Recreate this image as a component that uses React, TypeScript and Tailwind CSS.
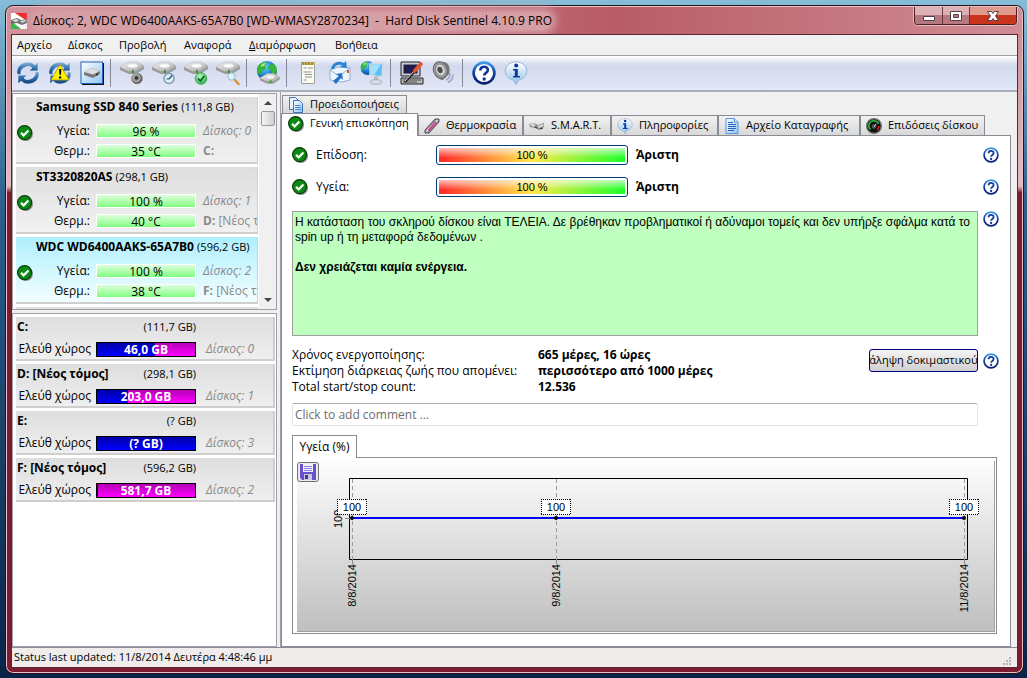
import { useState, type ReactNode } from 'react';

const disks = [
  { id: 0, name: 'Samsung SSD 840 Series', size: '(111,8 GB)', health: '96 %', temp: '35 °C', drive: 'C:', label: '' },
  { id: 1, name: 'ST3320820AS', size: '(298,1 GB)', health: '100 %', temp: '40 °C', drive: 'D:', label: '[Νέος τόμος]' },
  { id: 2, name: 'WDC WD6400AAKS-65A7B0', size: '(596,2 GB)', health: '100 %', temp: '38 °C', drive: 'F:', label: '[Νέος τόμος]' },
];

const volumes = [
  { name: 'C:', size: '(111,7 GB)', free: '46,0 GB', used: 59, disk: 0 },
  { name: 'D: [Νέος τόμος]', size: '(298,1 GB)', free: '203,0 GB', used: 32, disk: 1 },
  { name: 'E:', size: '(? GB)', free: '(? GB)', used: 100, disk: 3 },
  { name: 'F: [Νέος τόμος]', size: '(596,2 GB)', free: '581,7 GB', used: 1, disk: 2 },
];

const menu = [
  { text: 'Αρχείο', width: 'w-[51px]' },
  { text: 'Δίσκος', width: 'w-[51px]' },
  { text: 'Προβολή', width: 'w-[65px]' },
  { text: 'Αναφορά', width: 'w-[65px]' },
  { text: 'Διαμόρφωση', width: 'w-[86px]', accel: true },
  { text: 'Βοήθεια', width: 'w-[60px]' },
];

function Defs() {
  return (
    <svg className="absolute h-0 w-0" aria-hidden="true">
      <defs>
        <linearGradient id="sync" x1="0" y1="0" x2="0" y2="1">
          <stop offset="0" stopColor="#8fb6dd" />
          <stop offset="0.5" stopColor="#2f6fae" />
          <stop offset="1" stopColor="#123f78" />
        </linearGradient>
        <linearGradient id="metal" x1="0" y1="0" x2="1" y2="1">
          <stop offset="0" stopColor="#fafafa" />
          <stop offset="1" stopColor="#a2a2a2" />
        </linearGradient>
        <radialGradient id="globe" cx="0.4" cy="0.3" r="0.8">
          <stop offset="0" stopColor="#6fd0ff" />
          <stop offset="0.6" stopColor="#1272c8" />
          <stop offset="1" stopColor="#083a80" />
        </radialGradient>
        <radialGradient id="ok" cx="0.4" cy="0.3" r="0.8">
          <stop offset="0" stopColor="#b4f5bd" />
          <stop offset="1" stopColor="#1fae45" />
        </radialGradient>
        <linearGradient id="ring" x1="0" y1="0" x2="0" y2="1">
          <stop offset="0" stopColor="#3f9be8" />
          <stop offset="0.5" stopColor="#123c9c" />
          <stop offset="1" stopColor="#0a1f6e" />
        </linearGradient>
        <linearGradient id="bubble" x1="0" y1="0" x2="0" y2="1">
          <stop offset="0" stopColor="#ffffff" />
          <stop offset="1" stopColor="#8fc0e8" />
        </linearGradient>
        <linearGradient id="paper" x1="0" y1="0" x2="1" y2="1">
          <stop offset="0" stopColor="#ffffff" />
          <stop offset="1" stopColor="#8fc4f4" />
        </linearGradient>
        <linearGradient id="chart" x1="0" y1="0" x2="0" y2="1">
          <stop offset="0" stopColor="#fdfdfd" />
          <stop offset="1" stopColor="#bfbfbf" />
        </linearGradient>
      </defs>
    </svg>
  );
}

function Sync() {
  return (
    <>
      <path d="M1 13C0 6 5 1 12 1c3 0 5 1 7 3l3-3v9h-9l3-3c-2-2-4-2-6-1-4 1-6 4-5 8L1 13z" fill="url(#sync)" stroke="#e4eefa" strokeWidth="0.6" />
      <path d="M23 11c1 7-4 12-11 12-3 0-5-1-7-3l-3 3v-9h9l-3 3c2 2 4 2 6 1 4-1 6-4 5-8l4 1z" fill="url(#sync)" stroke="#e4eefa" strokeWidth="0.6" />
    </>
  );
}

function Drive() {
  return (
    <>
      <path d="M0 6L9 1h8l7 4v3l-8 5H9L0 9z" fill="#9a9a9a" />
      <path d="M0 6L9 1h8l7 4-8 5H8z" fill="url(#metal)" stroke="#b5b5b5" strokeWidth="0.5" />
      <ellipse cx="12.500" cy="4.800" rx="5" ry="2.200" fill="#f8f8f8" stroke="#c8c8c8" strokeWidth="0.5" />
      <path d="M12 9h2v3h-2z" fill="#2f9a2f" />
    </>
  );
}

function Globe() {
  return (
    <>
      <circle cx="11" cy="10" r="10" fill="url(#globe)" />
      <path d="M4 3c3-2 6-2 7-1l-2 3 1 3-4 2-1 4-3-2C0 9 1 5 4 3zM13 4l5-1c2 2 3 5 3 7l-3 5-3-1 1-4-4-2z" fill="#35b53a" />
      <path d="M5 4c2-2 4-2 5-2L8 5 5 6z" fill="#a4ec7c" />
    </>
  );
}

function Icon({ children }: { children: ReactNode }) {
  return (
    <svg className="h-6 w-6" viewBox="0 0 24 24" aria-hidden="true">
      {children}
    </svg>
  );
}

function SmallSpeaker() {
  return (
    <>
      <circle cx="17" cy="17.500" r="5.500" fill="#555" stroke="#a5a5a5" strokeWidth="0.800" />
      <circle cx="16.500" cy="17" r="3.800" fill="#8e8e8e" stroke="#ccc" strokeWidth="0.800" />
      <circle cx="16.500" cy="17" r="1.800" fill="#333" />
    </>
  );
}

function QuestionIcon({ big }: { big?: boolean }) {
  return (
    <svg className={big ? 'h-6 w-6' : 'h-4 w-4'} viewBox="0 0 24 24" aria-hidden="true">
      <circle cx="12" cy="12" r="10.400" fill="#fff" stroke="url(#ring)" strokeWidth="2.600" />
      <path d="M8.300 9.500c0-5 7.600-5 7.600-.5 0 3-3.700 2.800-3.700 5.500" fill="none" stroke="#0f3596" strokeWidth="2.600" />
      <circle cx="12.200" cy="18" r="1.700" fill="#0f3596" />
    </svg>
  );
}

function InfoIcon({ big }: { big?: boolean }) {
  return (
    <svg className={big ? 'h-6 w-6' : 'h-4 w-4'} viewBox="0 0 24 24" aria-hidden="true">
      <path d="M12 .8c6 0 10.800 4 10.800 9.200 0 4.700-3.600 8-8 8.900L12 23.500l-2.800-4.600c-4.400-.9-8-4.200-8-8.900C1.200 4.800 6 .8 12 .8z" fill="url(#bubble)" stroke="#8fb4d6" />
      <circle cx="12.200" cy="4.500" r="2" fill="#0b3a9c" />
      <path d="M9 8h4.800v7H16v1.600H9V15h1.800V9.600H9z" fill="#0b3a9c" />
    </svg>
  );
}

function CheckIcon() {
  return (
    <svg className="h-4 w-4 shrink-0" viewBox="0 0 16 16" aria-hidden="true">
      <circle cx="8.800" cy="8.800" r="7.200" fill="#888" />
      <circle cx="7.600" cy="7.600" r="7" fill="#0a8a12" stroke="#0b3d0d" strokeWidth="1.200" />
      <path d="M4 7.800l2.600 2.600 4.800-5" fill="none" stroke="#fff" strokeWidth="2.200" />
    </svg>
  );
}

const toolbar: { title: string; icon: ReactNode }[][] = [
  [
    { title: 'Refresh', icon: <Icon><Sync /></Icon> },
    {
      title: 'Refresh now',
      icon: (
        <Icon>
          <Sync />
          <path d="M12 3.500L21 19H3z" fill="#ffee00" stroke="#a89a00" strokeWidth="0.8" strokeLinejoin="round" />
          <path d="M11 8h2.400l-.6 6h-1.200zM11 15.500h2.200v2H11z" fill="#000" />
        </Icon>
      ),
    },
    {
      title: 'Disk view',
      icon: (
        <Icon>
          <rect x="2" y="2" width="22" height="22" fill="#111" />
          <rect x="1" y="1" width="21.500" height="21.500" fill="url(#paper)" stroke="#2463b8" />
          <path d="M4 11l8-4 8 3v3l-7 4-9-3z" fill="#777" />
          <path d="M4 11l8-4 8 3-7 3.500z" fill="#ddd" />
          <circle cx="17" cy="13.500" r="1" fill="#222" />
        </Icon>
      ),
    },
  ],
  [
    { title: 'Acoustic', icon: <Icon><Drive /><SmallSpeaker /></Icon> },
    {
      title: 'Short test',
      icon: (
        <Icon>
          <Drive />
          <circle cx="17" cy="17.500" r="5" fill="#dff0fb" stroke="#7d9bb3" strokeWidth="1.500" />
          <path d="M17 18l3-3.500M17 18h-2.500" stroke="#234f7a" strokeWidth="1.200" />
        </Icon>
      ),
    },
    {
      title: 'Extended test',
      icon: (
        <Icon>
          <Drive />
          <circle cx="17" cy="17.500" r="5.800" fill="url(#ok)" stroke="#2c9a44" strokeWidth="0.800" />
          <path d="M14 17.500l2.300 2.500 4-5" fill="none" stroke="#0a5a1e" strokeWidth="1.500" />
        </Icon>
      ),
    },
    {
      title: 'Surface test',
      icon: (
        <Icon>
          <Drive />
          <path d="M18 18l4.500 5" stroke="#e0913a" strokeWidth="2.600" strokeLinecap="round" />
          <circle cx="15.500" cy="15.500" r="3.700" fill="#d6f0ff" stroke="#9fb9cc" />
        </Icon>
      ),
    },
  ],
  [
    {
      title: 'Network disks',
      icon: <Icon><Globe /><g transform="translate(4 12) scale(.82)"><Drive /></g></Icon>,
    },
  ],
  [
    {
      title: 'Report',
      icon: (
        <Icon>
          <path d="M5.500 2.500h13v20h-13z" fill="#fbfbf3" stroke="#9da39a" />
          <path d="M5 1h14v3H5z" fill="#c8b35a" />
          <path d="M7 1v3M10 1v3M13 1v3M16 1v3" stroke="#7d6a2a" />
          <path d="M7.500 7h3M12 7h5M7.500 11h8M9 13.500h7M9 16h7M7.500 19h3" stroke="#8c9098" />
        </Icon>
      ),
    },
    {
      title: 'Send report',
      icon: (
        <Icon>
          <path d="M2 9l8-3 12 1v12l-8 2-12-2z" fill="#eef5fc" stroke="#8eb2d2" />
          <path d="M2 9l9 6 11-8" fill="none" stroke="#8eb2d2" />
          <path d="M3 8C4 3 8 0 13 1l3 1 2-2 1 7-7-1 2-2c-4-1-7 0-8 4z" fill="#2d83d6" />
          <path d="M19 9h2v3h-2z" fill="#d8501e" />
          <path d="M14 12l1 7-2-2-5 6-3-3 6-5-3-2z" fill="#2272cc" />
        </Icon>
      ),
    },
    {
      title: 'Web status',
      icon: (
        <Icon>
          <g transform="scale(.7)"><Globe /></g>
          <path d="M10 3l13-1-1 14-12-2z" fill="#5cc0f6" stroke="#d2d9e2" strokeWidth="1.500" />
          <path d="M11 4l10-1-7 11-3-1z" fill="#a3e0ff" />
          <path d="M14 15h4v5h-4z" fill="#b7bcc8" />
          <ellipse cx="16" cy="21" rx="6" ry="2.500" fill="#d6dae4" stroke="#a9aebb" />
        </Icon>
      ),
    },
  ],
  [
    {
      title: 'Configuration',
      icon: (
        <Icon>
          <path d="M1 1h19v14H1z" fill="#c9c9d0" stroke="#222" />
          <path d="M3.500 3.500h14v9H3.500z" fill="#1e1e4c" />
          <path d="M1 17h22v6H1z" fill="#b7b7bd" stroke="#222" />
          <path d="M3 19h18M3 21h14" stroke="#555" />
          <path d="M5 21L15 10" stroke="#222" strokeWidth="2.500" />
          <path d="M5 20L14 10" stroke="#ddd" />
          <path d="M14.500 10l6.500-7" stroke="#e4562a" strokeWidth="3.600" strokeLinecap="round" />
        </Icon>
      ),
    },
    {
      title: 'Sound',
      icon: (
        <Icon>
          <path d="M2 6l8-5c6-1 9 5 7 12l-6 6C6 19 1 14 2 6z" fill="#777" />
          <ellipse cx="8.500" cy="9" rx="7" ry="8.500" fill="#9a9a9a" stroke="#666" transform="rotate(-20 8.500 9)" />
          <ellipse cx="8.500" cy="9" rx="4.800" ry="6" fill="#d4d4d4" stroke="#888" transform="rotate(-20 8.500 9)" />
          <ellipse cx="8" cy="9" rx="2.500" ry="3.200" fill="#4a4a4a" transform="rotate(-20 8 9)" />
          <path d="M14 19c3-1 4-4 4-7M16 21.500c4-2 5-5 5-8" fill="none" stroke="#9d9fc4" strokeWidth="1.500" />
        </Icon>
      ),
    },
  ],
  [
    { title: 'Help', icon: <QuestionIcon big /> },
    { title: 'About', icon: <InfoIcon big /> },
  ],
];

const tabs: { text: string; width: string; icon: ReactNode }[] = [
  { text: 'Γενική επισκόπηση', width: 'w-[137px]', icon: <CheckIcon /> },
  {
    text: 'Θερμοκρασία',
    width: 'w-[105px]',
    icon: (
      <svg className="h-4 w-4 shrink-0" viewBox="0 0 16 16" aria-hidden="true">
        <path d="M1 12L11 1h4v3L5 15H1z" fill="#8d8d94" stroke="#55555c" />
        <path d="M2.500 13.500L13.500 2" stroke="#ededf0" strokeWidth="1.300" />
        <path d="M4.500 12.500L12 4" stroke="#e0409a" strokeWidth="2" />
      </svg>
    ),
  },
  {
    text: 'S.M.A.R.T.',
    width: 'w-[88px]',
    icon: (
      <svg className="h-4 w-4 shrink-0" viewBox="0 0 16 16" aria-hidden="true">
        <path d="M0 6l5-1 4 2 6-2v4l-5 3-4-2-5-1z" fill="#8b8b8b" />
        <path d="M0 6l4-1 3 2-3 2zM8 8l6-2 1 2-5 2z" fill="#d5d5d5" />
        <path d="M6 9l2 1M11 11l3-1" stroke="#333" />
      </svg>
    ),
  },
  { text: 'Πληροφορίες', width: 'w-[107px]', icon: <InfoIcon /> },
  {
    text: 'Αρχείο Καταγραφής',
    width: 'w-[142px]',
    icon: (
      <svg className="h-4 w-4 shrink-0" viewBox="0 0 16 16" aria-hidden="true">
        <path d="M2 .5h8.500L14 4v11.500H2z" fill="url(#paper)" stroke="#5a94d4" />
        <path d="M10.500.5V4H14" fill="#d8ecff" stroke="#5a94d4" />
        <path d="M4 4.500h5M4 6.500h8M4 8.500h8M4 10.500h8M4 12.500h6" stroke="#2a62b8" />
      </svg>
    ),
  },
  {
    text: 'Επιδόσεις δίσκου',
    width: 'w-[125px]',
    icon: (
      <svg className="h-4 w-4 shrink-0" viewBox="0 0 16 16" aria-hidden="true">
        <circle cx="8" cy="8" r="7.300" fill="#111" stroke="#6d6d6d" strokeWidth="1.400" />
        <path d="M4.500 11.500A5 5 0 1 1 12.500 6" fill="none" stroke="#20c43a" strokeWidth="1.600" />
        <path d="M13 8a5 5 0 0 1-2 3.800" fill="none" stroke="#e02020" strokeWidth="1.600" />
        <circle cx="8" cy="8.500" r="1.800" fill="#3a3a3a" stroke="#888" strokeWidth="0.600" />
        <path d="M8 9l2-3" stroke="#ddd" />
      </svg>
    ),
  },
];

function HelpButton() {
  return (
    <button aria-label="Help" className="h-4 w-4 shrink-0">
      <QuestionIcon />
    </button>
  );
}

function DiskItem({ disk, selected }: { disk: (typeof disks)[number]; selected: boolean }) {
  return (
    <li
      className={`mb-[3px] box-content flex h-[65px] overflow-hidden border-b-2 border-r border-[#cfcfcf] bg-linear-to-b whitespace-nowrap ${
        selected ? 'from-[#aeeffe] to-[#f2feff]' : 'from-[#dedede] to-[#f1f1f1]'
      }`}
    >
      <div className="flex w-5 shrink-0 items-center pt-[6px] pl-px">
        <CheckIcon />
      </div>
      <div>
        <div className="mb-1 leading-5">
          <b>{disk.name}</b> <span className="text-[11px]">{disk.size}</span>
        </div>
        <div className="flex h-5 items-center">
          <span className="w-[54px] text-right">Υγεία:</span>
          <Meter text={disk.health} />
          <i className="pl-px text-[#8a8a8a]">Δίσκος: {disk.id}</i>
        </div>
        <div className="flex h-5 items-center">
          <span className="w-[54px] text-right">Θερμ.:</span>
          <Meter text={disk.temp} />
          <span className="pl-px text-[#8a8a8a]">
            <b>{disk.drive}</b> {disk.label}
          </span>
        </div>
      </div>
    </li>
  );
}

function Meter({ text }: { text: string }) {
  return (
    <span className="mx-[6px] h-[14px] w-[100px] shrink-0 border border-white bg-linear-to-b from-[#dcffdc] to-[#7dff7d] text-center leading-[14px]">
      {text}
    </span>
  );
}

function VolumeItem({ volume }: { volume: (typeof volumes)[number] }) {
  return (
    <li className="mb-[3px] box-content h-[42px] border-b-2 border-r-2 border-[#cfcfcf] bg-linear-to-b from-[#dedede] to-[#efefef] whitespace-nowrap">
      <div className="flex w-[180px] justify-between pl-px leading-5">
        <b>{volume.name}</b>
        <span className="text-[11px]">{volume.size}</span>
      </div>
      <div className="flex h-6 items-center">
        <span className="w-[75px] text-right">Ελεύθ χώρος</span>
        <div className="relative ml-[5px] h-[15px] w-[100px] overflow-hidden border border-black bg-linear-to-b from-[#b400b4] to-[#ff00ff] text-center leading-[14px] font-bold text-white">
          <div className="absolute inset-y-0 left-0 bg-linear-to-b from-[#0000a8] to-[#0000ff]" style={{ width: `${volume.used}%` }} />
          <span className="relative">{volume.free}</span>
        </div>
        <i className="ml-[10px] text-[#8a8a8a]">Δίσκος: {volume.disk}</i>
      </div>
    </li>
  );
}

function StatusRow({ label }: { label: string }) {
  return (
    <div className="flex h-8 items-center">
      <CheckIcon />
      <span className="ml-2 w-[120px]">{label}</span>
      <div className="h-5 w-[192px] rounded-[3px] border border-[#003c74] bg-white p-[2px]">
        <div className="h-full bg-linear-to-r/srgb from-[#ff2828] via-[#ffe94a] to-[#1cff28]">
          <div className="h-full bg-linear-to-b from-white/70 to-transparent to-70% text-center font-['Liberation_Sans'] text-[11px] leading-[14px]">
            100 %
          </div>
        </div>
      </div>
      <b className="ml-2">Άριστη</b>
      <span className="flex-1" />
      <HelpButton />
    </div>
  );
}

const points = [
  { x: 55, date: '8/8/2014' },
  { x: 259, date: '9/8/2014' },
  { x: 667, date: '11/8/2014' },
];

function HealthChart() {
  return (
    <svg className="block w-full border-r border-b border-[#a0a0a0]" viewBox="0 0 697 170" fontFamily="Liberation Sans, sans-serif" fontSize="11">
      <rect width="697" height="170" fill="url(#chart)" />
      <path d="M52.500 17.500h618v81h-618z" fill="none" stroke="#000" />
      <path d="M48 57.500h5" stroke="#888" />
      <text transform="translate(45 67) rotate(-90)">100</text>
      {points.map((p) => (
        <g key={p.date}>
          <path d={`M${p.x + 0.5} 18v82`} stroke="#999" strokeDasharray="4 3" />
          <path d={`M${p.x + 0.5} 99v4`} stroke="#888" />
        </g>
      ))}
      <path d="M55 57h612" stroke="#0000ff" strokeWidth="2" />
      {points.map((p) => (
        <g key={p.date}>
          <circle cx={p.x} cy="57" r="2" fill="#000" />
          <rect x={p.x - 14.5} y="38.500" width="29" height="15" fill="#fff" />
          <path
            d={`M${p.x - 15} 38.500h30M${p.x - 15} 53.500h30M${p.x - 14.5} 38v16M${p.x + 14.5} 38v16`}
            stroke="#000"
            strokeDasharray="1 1"
            shapeRendering="crispEdges"
          />
          <text x={p.x} y="50" textAnchor="middle">
            100
          </text>
          <text transform={`translate(${p.x + 4} 103) rotate(-90)`} textAnchor="end">
            {p.date}
          </text>
        </g>
      ))}
    </svg>
  );
}

export default function App() {
  const [tab, setTab] = useState(0);
  const [comment, setComment] = useState('');

  return (
    <div className="flex h-screen flex-col bg-linear-to-b from-[#86bdd8] via-[#2c5f8c] via-30% to-[#0a2448] pt-[5px] pr-[3px] pb-1 pl-[5px] font-['Open_Sans','Noto_Sans',sans-serif] text-[12px] text-black">
      <Defs />
      <div className="flex min-h-0 flex-1 flex-col rounded-lg border border-[#23131a] bg-linear-to-b from-[#c9848d] via-[#e3bcc2] via-27% to-[#7d1c30] to-28% px-[5px] pb-[5px] shadow-[inset_0_0_0_1px_#e9c3c8]">
        <header className="-mx-1 mt-px flex h-[27px] shrink-0 items-start justify-between rounded-t-md bg-linear-to-r from-[#d0929a] via-[#b85c68] via-60% to-[#d08d95] pr-[5px] pl-1">
          <div className="flex h-full items-center gap-[6px]">
            <svg className="h-4 w-4" viewBox="0 0 16 16" aria-hidden="true">
              <path d="M0 0h16v16H0z" fill="#fff" />
              <path d="M4 0h12v8z" fill="#ee2a2a" />
              <path d="M0 8l10 8H0z" fill="#37b84a" />
              <path d="M0 7l6-2 4 2 6-1v4l-5 2-5-2-6 1z" fill="#6f6f6f" />
              <path d="M1 7l5-1 2 2-4 1zM9 8l6-1v1l-4 2z" fill="#dcdcdc" />
            </svg>
            <h1 className="rounded-full bg-[#d69fa6] whitespace-pre shadow-[0_0_8px_4px_#d69fa6]">
              {'Δίσκος: 2, WDC WD6400AAKS-65A7B0 [WD-WMASY2870234]  -  Hard Disk Sentinel 4.10.9 PRO'}
            </h1>
          </div>
          <div className="flex h-[18px] overflow-hidden rounded-b-[4px] border border-t-0 border-[#4b2027] shadow-[0_0_0_1px_#e6bcc1]">
            <button aria-label="Minimize" className="grid w-7 place-items-center border-r border-[#6b3540] bg-linear-to-b from-[#dcb2b7] from-50% to-[#b57780] to-50%">
              <svg className="h-3 w-4" viewBox="0 0 16 12">
                <path d="M2.500 6.500h11v4h-11z" fill="#fff" stroke="#534048" />
              </svg>
            </button>
            <button aria-label="Maximize" className="grid w-[27px] place-items-center border-r border-[#6b3540] bg-linear-to-b from-[#dcb2b7] from-50% to-[#b57780] to-50%">
              <svg className="h-3 w-4" viewBox="0 0 16 12">
                <path d="M2.500 1.500h11v9h-11z" fill="#fff" stroke="#534048" />
                <path d="M5.500 4.500h5v3h-5z" fill="#c08089" stroke="#534048" />
              </svg>
            </button>
            <button aria-label="Close" className="grid w-[46px] place-items-center bg-linear-to-b from-[#e09a8c] from-50% to-[#c8341c] to-50%">
              <svg className="h-3 w-4" viewBox="0 0 16 12">
                <path d="M2.500 1.500h4L8 3.500l1.500-2h4L10.500 6l3 4.500h-4L8 8.500l-1.500 2h-4l3-4.500z" fill="#fff" stroke="#534048" />
              </svg>
            </button>
          </div>
        </header>

        <main className="flex min-h-0 flex-1 flex-col overflow-hidden border border-[#5a2630] bg-[#f0f0f0]">
          <nav className="flex h-[21px] shrink-0 items-center border-b border-[#a0a0a0] pl-[5px] text-[11px]">
            {menu.map((m) => (
              <button key={m.text} className={`text-left whitespace-nowrap ${m.width}`}>
                {m.accel ? (
                  <>
                    <u>{m.text[0]}</u>
                    {m.text.slice(1)}
                  </>
                ) : (
                  m.text
                )}
              </button>
            ))}
          </nav>

          <div className="flex h-9 shrink-0 items-center border-b-2 border-[#a9adbb] bg-linear-to-b from-white via-[#d3d9ed] via-28% to-[#e3e8f7]">
            {toolbar.map((group, i) => (
              <div key={i} className="flex items-center">
                {i > 0 && <span className="ml-[2px] h-7 w-[6px] border-l border-[#85899a]" />}
                {group.map((b) => (
                  <button key={b.title} aria-label={b.title} className="grid h-8 w-8 place-items-center">
                    {b.icon}
                  </button>
                ))}
              </div>
            ))}
          </div>

          <div className="flex min-h-0 flex-1">
            <aside className="flex w-[265px] shrink-0 flex-col gap-[3px] pt-px">
              <div className="flex h-[217px] shrink-0 border border-[#a0a0a8] bg-white">
                <ul className="min-w-0 flex-1 overflow-hidden pt-[3px] pl-[3px]">
                  {disks.map((d) => (
                    <DiskItem key={d.id} disk={d} selected={d.id === 2} />
                  ))}
                  <li className="h-1 bg-[#dedede]" />
                </ul>
                <div className="ml-px flex w-[17px] flex-col items-center bg-[#f0f0f0]">
                  <svg className="h-[17px] w-2" viewBox="0 0 8 17">
                    <path d="M0 11l4-4 4 4z" fill="#444" />
                  </svg>
                  <div className="h-[15px] w-[14px] rounded-[2px] border border-[#979797] bg-linear-to-r from-[#f5f5f5] to-[#cfcfcf]" />
                  <span className="flex-1" />
                  <svg className="h-[17px] w-2" viewBox="0 0 8 17">
                    <path d="M0 6l4 4 4-4z" fill="#444" />
                  </svg>
                </div>
              </div>
              <ul className="min-h-0 flex-1 border border-[#a0a0a8] bg-white pt-[3px] pr-px pl-[3px]">
                {volumes.map((v) => (
                  <VolumeItem key={v.name} volume={v} />
                ))}
              </ul>
            </aside>

            <section className="ml-[3px] flex min-w-0 flex-1 flex-col border-l border-[#a0a0a8] pt-[3px] pr-[6px]">
              <div className="ml-px flex h-[18px] shrink-0 text-[11px]">
                <button className="flex w-[125px] items-center gap-[6px] border border-b-0 border-[#898c95] bg-linear-to-b from-[#f2f2f2] to-[#d8d8d8] pl-[5px] whitespace-nowrap">
                  <svg className="h-4 w-4 shrink-0" viewBox="0 0 16 16" aria-hidden="true">
                    <path d="M1.500.500h6l3 3v9h-9z" fill="#eaf4ff" stroke="#3c74c0" />
                    <path d="M5.500 3.500h6l3 3v9h-9z" fill="url(#paper)" stroke="#3c74c0" />
                    <path d="M7 8.500h5M7 10.500h6M7 12.500h6" stroke="#4d88cc" />
                  </svg>
                  Προειδοποιήσεις
                </button>
              </div>
              <div className="flex h-[22px] shrink-0 items-end text-[11px]" role="tablist">
                {tabs.map((t, i) => (
                  <button
                    key={t.text}
                    role="tab"
                    aria-selected={tab === i}
                    onClick={() => setTab(i)}
                    className={`flex shrink-0 items-center gap-[6px] border border-b-0 border-[#898c95] whitespace-nowrap ${t.width} ${
                      tab === i ? 'z-10 -mb-px h-[23px] bg-white pb-[3px] pl-[6px]' : 'h-5 bg-linear-to-b from-[#f2f2f2] to-[#d8d8d8] pl-[5px]'
                    }`}
                  >
                    {t.icon}
                    {t.text}
                  </button>
                ))}
              </div>

              <div className="min-h-0 flex-1 border border-[#898c95] bg-white pt-[3px] pr-[11px] pl-[10px]">
                <StatusRow label="Επίδοση:" />
                <StatusRow label="Υγεία:" />

                <div className="mt-2 flex gap-[5px]">
                  <div className="h-[125px] flex-1 border border-[#a0a0a0] bg-[#bfffbf] px-[2px] pt-[3px] font-['Liberation_Sans'] leading-[15px]">
                    Η κατάσταση του σκληρού δίσκου είναι ΤΕΛΕΙΑ. Δε βρέθηκαν προβληματικοί ή αδύναμοι τομείς και δεν υπήρξε σφάλμα κατά το spin up ή τη μεταφορά δεδομένων .
                    <p className="mt-[15px] font-bold">Δεν χρειάζεται καμία ενέργεια.</p>
                  </div>
                  <HelpButton />
                </div>

                <div className="mt-[11px] flex items-start">
                  <dl className="grid flex-1 grid-cols-[246px_1fr] leading-4 whitespace-nowrap">
                    <dt>Χρόνος ενεργοποίησης:</dt>
                    <dd className="font-bold">665 μέρες, 16 ώρες</dd>
                    <dt>Εκτίμηση διάρκειας ζωής που απομένει:</dt>
                    <dd className="font-bold">περισσότερο από 1000 μέρες</dd>
                    <dt>Total start/stop count:</dt>
                    <dd className="font-bold">12.536</dd>
                  </dl>
                  <div className="mt-[2px] flex items-center gap-[5px]">
                    <button className="flex h-[23px] w-[109px] items-center justify-center overflow-hidden rounded-[3px] border border-[#000080] bg-linear-to-b from-[#f4f4f4] to-[#cfcfcf] text-[11px] whitespace-nowrap">
                      άληψη δοκιμαστικού
                    </button>
                    <HelpButton />
                  </div>
                </div>

                <div className="mt-2 pr-[21px]">
                  <input
                    aria-label="Comment"
                    value={comment}
                    onChange={(e) => setComment(e.target.value)}
                    placeholder="Click to add comment ..."
                    className="block h-[23px] w-full rounded-[2px] border border-[#e2e3ea] border-t-[#abadb3] px-[2px] placeholder:text-[#6d6d6d]"
                  />
                </div>

                <button className="relative mt-[9px] block h-[23px] w-[65px] border border-b-0 border-[#898c95] bg-white">Υγεία (%)</button>
                <div className="relative -mt-px mr-[2px] border border-[#898c95] bg-white pt-[3px] pr-px pb-px pl-1">
                  <span className="absolute -top-px left-0 h-px w-[63px] bg-white" />
                  <HealthChart />
                  <button aria-label="Save" className="absolute top-1 left-1 grid h-5 w-[22px] place-items-center rounded-[3px] border border-[#707070] bg-[#ececec]">
                    <svg className="h-4 w-4" viewBox="0 0 16 16">
                      <path d="M0 0h16v16H2l-2-2z" fill="#6a4fcf" />
                      <path d="M3 0h10v8H3z" fill="#f3f1fb" />
                      <path d="M4 2.500h8M4 4.500h8M4 6.500h8" stroke="#8f7fd6" />
                      <path d="M4 10h8v6H4z" fill="#c9c9d6" />
                      <path d="M5 11h3v4H5z" fill="#4a33a8" />
                    </svg>
                  </button>
                </div>
              </div>
            </section>
          </div>

          <footer className="flex h-5 shrink-0 items-center justify-between border-t border-[#898c95] bg-[#f0eceb] pr-1 pl-[2px] text-[11px]">
            <span>Status last updated: 11/8/2014 Δευτέρα 4:48:46 μμ</span>
            <svg className="h-3 w-3 self-end" viewBox="0 0 12 12" aria-hidden="true">
              <path d="M8 2h2v2H8zM5 5h2v2H5zM8 5h2v2H8zM2 8h2v2H2zM5 8h2v2H5zM8 8h2v2H8z" fill="#b8b4b4" />
            </svg>
          </footer>
        </main>
      </div>
    </div>
  );
}
